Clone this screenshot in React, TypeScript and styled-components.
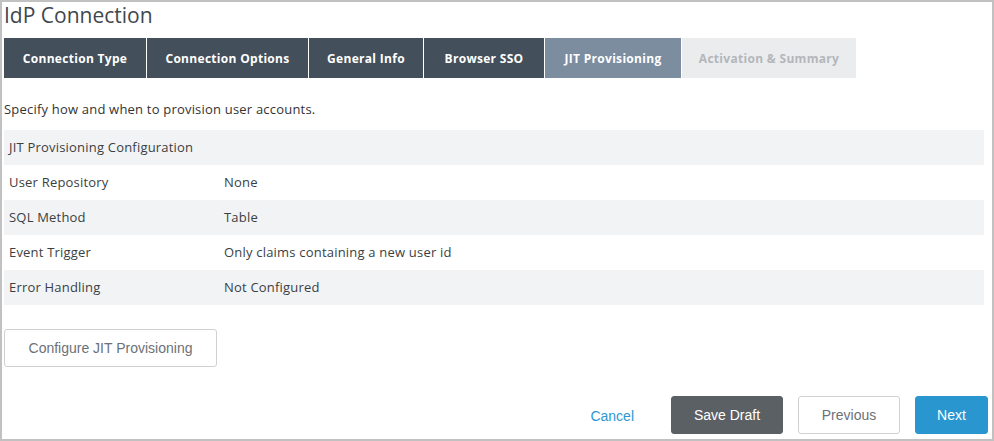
import React from "react";
import styled, { createGlobalStyle } from "styled-components";

const Global = createGlobalStyle`
  html, body { margin: 0; padding: 0; background: #fff; }
  * { box-sizing: border-box; }
`;

const Frame = styled.div`
  width: 994px;
  height: 441px;
  border: 2px solid #c1c1c1;
  padding: 0 8px 0 2px;
  display: flex;
  flex-direction: column;
  font-family: "Open Sans", Lato, sans-serif;
  color: #333;
`;

const Title = styled.h1`
  margin: 0;
  height: 36px;
  font-size: 21px;
  font-weight: 400;
  line-height: 26px;
  color: #40474d;
`;

const Tabs = styled.div`
  display: flex;
  height: 40px;
`;

const Tab = styled.div<{ $state: "done" | "active" | "todo"; $w: number }>`
  width: ${(p) => p.$w}px;
  display: flex;
  align-items: center;
  justify-content: center;
  font-size: 12px;
  font-weight: 700;
  letter-spacing: 0.3px;
  margin-right: 1px;
  background: ${(p) =>
    p.$state === "done" ? "#434f5a" : p.$state === "active" ? "#7b8d9f" : "#ebecee"};
  color: ${(p) => (p.$state === "todo" ? "#b3b7bb" : "#fff")};
`;

const Intro = styled.p`
  margin: 0;
  padding-top: 22px;
  height: 52px;
  font-size: 13px;
  line-height: 18px;
  letter-spacing: 0.2px;
  color: #333;
`;

const Table = styled.div`
  display: flex;
  flex-direction: column;
`;

const Row = styled.div<{ $shade: boolean }>`
  display: flex;
  align-items: center;
  height: 35px;
  padding: 0 0 2px 5px;
  background: ${(p) => (p.$shade ? "#f2f3f5" : "#fff")};
  font-size: 13px;
  letter-spacing: 0.2px;
  color: #3a3f44;
`;

const Label = styled.div`
  width: 215px;
`;

const Value = styled.div``;

const ConfigButton = styled.button`
  margin-top: 24px;
  width: 213px;
  height: 38px;
  background: #fff;
  border: 1px solid #cfd1d3;
  border-radius: 3px;
  font-family: "Liberation Sans", Arial, sans-serif;
  font-size: 14px;
  color: #6c7177;
  align-self: flex-start;
`;

const Footer = styled.div`
  margin-top: auto;
  margin-bottom: 5px;
  display: flex;
  justify-content: flex-end;
  align-items: center;
  gap: 15px;
  font-family: "Liberation Sans", Arial, sans-serif;
  font-size: 14px;
  margin-right: -4px;
`;

const LinkBtn = styled.button`
  background: none;
  border: none;
  color: #2d97d3;
  font: inherit;
  margin-right: 22px;
  padding: 0;
  margin-top: 2px;
`;

const Btn = styled.button<{ $kind: "dark" | "light" | "primary"; $w: number }>`
  width: ${(p) => p.$w}px;
  height: 38px;
  border-radius: 3px;
  font: inherit;
  border: 1px solid
    ${(p) => (p.$kind === "light" ? "#cfd1d3" : p.$kind === "dark" ? "#5b6064" : "#2a96cf")};
  background: ${(p) => (p.$kind === "light" ? "#fff" : p.$kind === "dark" ? "#5b6064" : "#2a96cf")};
  color: ${(p) => (p.$kind === "light" ? "#6c7177" : "#fff")};
`;

const tabs: { label: string; w: number; state: "done" | "active" | "todo" }[] = [
  { label: "Connection Type", w: 142, state: "done" },
  { label: "Connection Options", w: 161, state: "done" },
  { label: "General Info", w: 114, state: "done" },
  { label: "Browser SSO", w: 120, state: "done" },
  { label: "JIT Provisioning", w: 136, state: "active" },
  { label: "Activation & Summary", w: 174, state: "todo" },
];

const rows: [string, string][] = [
  ["JIT Provisioning Configuration", ""],
  ["User Repository", "None"],
  ["SQL Method", "Table"],
  ["Event Trigger", "Only claims containing a new user id"],
  ["Error Handling", "Not Configured"],
];

export default function App() {
  return (
    <>
      <Global />
      <Frame>
        <Title>IdP Connection</Title>
        <Tabs>
          {tabs.map((t) => (
            <Tab key={t.label} $state={t.state} $w={t.w}>
              {t.label}
            </Tab>
          ))}
        </Tabs>
        <Intro>Specify how and when to provision user accounts.</Intro>
        <Table>
          {rows.map(([l, v], i) => (
            <Row key={l} $shade={i % 2 === 0}>
              <Label>{l}</Label>
              {v && <Value>{v}</Value>}
            </Row>
          ))}
        </Table>
        <ConfigButton>Configure JIT Provisioning</ConfigButton>
        <Footer>
          <LinkBtn>Cancel</LinkBtn>
          <Btn $kind="dark" $w={112}>Save Draft</Btn>
          <Btn $kind="light" $w={102}>Previous</Btn>
          <Btn $kind="primary" $w={73}>Next</Btn>
        </Footer>
      </Frame>
    </>
  );
}
